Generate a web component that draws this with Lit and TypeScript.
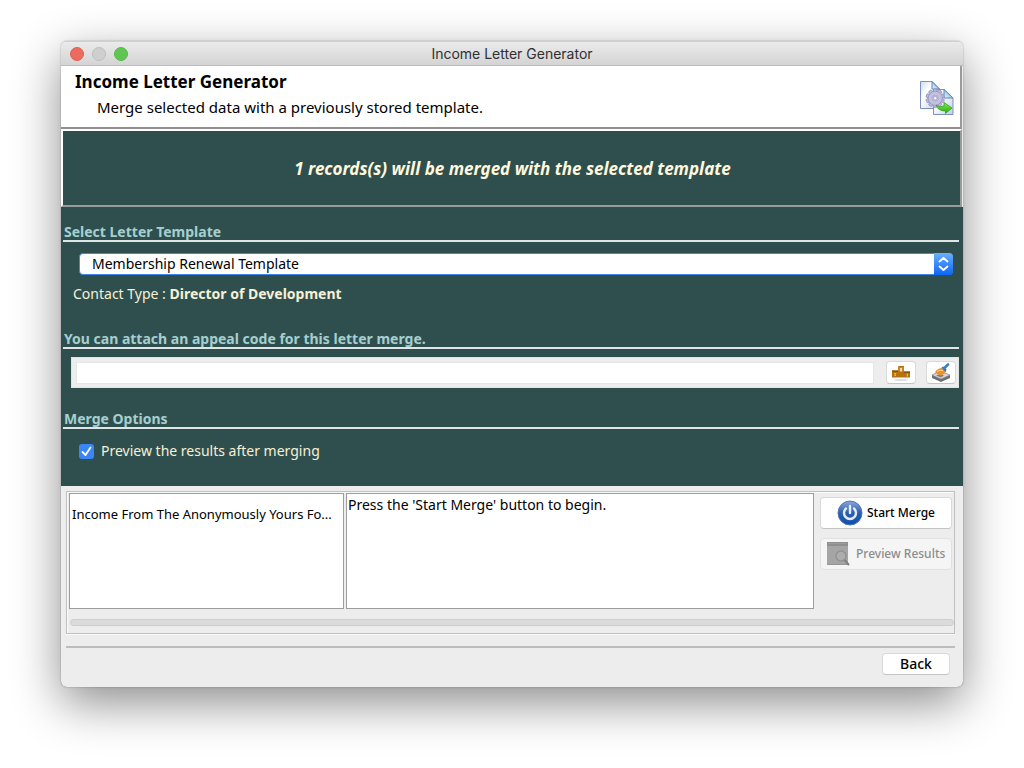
import { LitElement, html, css, svg } from "lit";
import { customElement, state } from "lit/decorators.js";

const gearTeeth = [0, 36, 72, 108, 144, 180, 216, 252, 288, 324];

const mergeIcon = html`<svg class="merge-icon" viewBox="0 0 36 36" aria-hidden="true">
  <defs>
    <linearGradient id="sheet" x1="0" y1="0" x2="1" y2="1">
      <stop offset="0" stop-color="#c9dbf0" /><stop offset=".35" stop-color="#fff" /><stop offset="1" stop-color="#bcd0e6" />
    </linearGradient>
    <linearGradient id="fold" x1="0" y1="1" x2="1" y2="0">
      <stop offset="0" stop-color="#f2faff" /><stop offset="1" stop-color="#4a9bd0" />
    </linearGradient>
    <linearGradient id="arrow" x1="0" y1="0" x2="0" y2="1">
      <stop offset="0" stop-color="#7df04a" /><stop offset="1" stop-color="#28a80e" />
    </linearGradient>
  </defs>
  <path d="M1.5 1.5H13L20.500 9V28.500H1.500Z" fill="url(#sheet)" stroke="#7c8fbd" />
  <path d="M13 1.500V9H20.500Z" fill="url(#fold)" stroke="#5f86b4" />
  <path d="M14.500 9.500H25L34 18V34.500H14.500Z" fill="url(#sheet)" stroke="#7c8fbd" />
  <path d="M25 9.500V18H34Z" fill="url(#fold)" stroke="#5f86b4" />
  <g fill="#bdbbdc" stroke="#8986b5" stroke-width=".7">
    ${gearTeeth.map((a) => svg`<rect x="14.400" y="9" width="3.600" height="5" rx="1" transform="rotate(${a} 16.200 18.200)" />`)}
    <circle cx="16.200" cy="18.200" r="7" />
  </g>
  <circle cx="16.200" cy="18.200" r="6.500" fill="#c3c1e2" />
  <circle cx="16.200" cy="18.200" r="3" fill="none" stroke="#b0add6" />
  <circle cx="16.200" cy="18.200" r="1.700" fill="#fff" stroke="#8f8cba" stroke-width=".6" />
  <path d="M17 25Q20 28 25 26V22.500L33 28L26.500 33.500V31Q19 31 17 25Z" fill="url(#arrow)" stroke="#3a9a24" stroke-width=".8" />
</svg>`;

const podiumIcon = html`<svg width="20" height="18" viewBox="0 0 20 18" aria-hidden="true">
  <ellipse cx="10" cy="16" rx="7" ry="1" fill="#ddd" />
  <path d="M1 6.500H7V2.500L8 2H13V7.500H19V13.500H1Z" fill="#b5720f" />
  <path d="M7 3H13V7.500H7Z" fill="#c98518" />
  <path d="M1 6.500H7V8H1ZM13 7.500H19V9H13Z" fill="#8a5104" />
  <path d="M10 4V7.500" stroke="#fff" stroke-width="1.400" />
  <path d="M3 9.500H5L3.500 11.500H5M15.500 10H17L16 11L17 12H15.500" fill="none" stroke="#e9c27c" stroke-width=".8" />
</svg>`;

const brushIcon = html`<svg width="20" height="20" viewBox="0 0 20 20" aria-hidden="true">
  <path d="M1 12L9 8L19 12V15L10 19L1 15Z" fill="#6d6d72" />
  <path d="M1 12L9 8L19 12L10 16Z" fill="#d5d7da" stroke="#8b8b90" stroke-width=".6" />
  <path d="M5 12.500L9 11L13 12.500L10 14.500Z" fill="#7d7f86" />
  <path d="M4 9Q7 5 11 5L15 8.500Q13 12 10 12.500Q6 12 4 9Z" fill="#ef9126" />
  <path d="M6 8.500Q9 6.500 12 7.500" fill="none" stroke="#ffd08a" />
  <path d="M10.500 4.500L12.500 3.500L15.500 6.500L14.500 9Z" fill="#2d6fb8" />
  <path d="M13.500 5L17 1.500" stroke="#3d7fc9" stroke-width="2.600" stroke-linecap="round" />
</svg>`;

const powerIcon = html`<svg width="26" height="26" viewBox="0 0 26 26" aria-hidden="true">
  <defs>
    <linearGradient id="power" x1="0" y1="0" x2="0" y2="1">
      <stop offset="0" stop-color="#8aa9db" /><stop offset=".5" stop-color="#2a5eb0" /><stop offset="1" stop-color="#0c4fae" />
    </linearGradient>
  </defs>
  <circle cx="13" cy="13" r="12" fill="url(#power)" stroke="#5274b4" />
  <path d="M9 8.500A6 6 0 1 0 17 8.500" fill="none" stroke="#e6edf8" stroke-width="2.400" stroke-linecap="round" />
  <path d="M13 6V13" stroke="#e6edf8" stroke-width="2.400" stroke-linecap="round" />
</svg>`;

const previewIcon = html`<svg width="24" height="26" viewBox="0 0 24 26" aria-hidden="true">
  <rect x="1" y="2" width="21" height="22" fill="#a5a5a5" />
  <rect x="1" y="1" width="21" height="4" fill="#8f8f8f" />
  <path d="M2 2.500H21" stroke="#9c9c9c" />
  <path d="M1 23.500H22" stroke="#949494" />
  <circle cx="15" cy="15" r="5" fill="#adadad" stroke="#929292" stroke-width="1.400" />
  <path d="M18.500 19L23 24" stroke="#808080" stroke-width="2" />
</svg>`;

@customElement("app-root")
export class AppRoot extends LitElement {
  @state() private preview = true;

  static styles = css`
    :host {
      display: block;
      box-sizing: border-box;
      min-height: 100vh;
      padding: 41px 61px 81px;
      background: #fff;
      color: #000;
      font-family: "Noto Sans", sans-serif;
      font-size: 14px;
      line-height: 20px;
      overflow: hidden;
    }
    * { box-sizing: border-box; }
    h1, h2, p { margin: 0; }
    svg { display: block; flex: none; }
    button, input, select { font: inherit; color: inherit; margin: 0; }

    .window {
      border-radius: 6px;
      background: #ededed;
      box-shadow: 0 0 1px rgba(0, 0, 0, 0.5), 0 0 3px rgba(0, 0, 0, 0.1), 0 16px 48px rgba(0, 0, 0, 0.45);
      overflow: hidden;
    }
    .titlebar {
      display: grid;
      grid-template-columns: 1fr auto 1fr;
      align-items: center;
      height: 25px;
      padding: 0 9px;
      background: linear-gradient(#ebebeb, #d4d4d4);
      border-top: 1px solid #d0d0d0;
      border-bottom: 1px solid #bcbcbc;
      color: #303030;
      font-family: Inter, sans-serif;
      font-size: 14px;
    }
    .lights { display: flex; gap: 8px; }
    .light { width: 14px; height: 14px; border-radius: 50%; border: 1px solid #dd5f54; background: #ec6a5e; }
    .light.idle { border-color: #bdbdbd; background: #cfcfcf; }
    .light.zoom { border-color: #58b947; background: #61c554; }

    .header {
      display: flex;
      justify-content: space-between;
      align-items: flex-start;
      height: 63px;
      padding: 4px 5px 0 14px;
      background: #fff;
      border-right: 2px solid #9a9a9a;
      border-bottom: 2px solid #8f8f8f;
      margin-right: 1px;
    }
    .header h1 { font-size: 17px; line-height: 24px; font-weight: 700; }
    .header p { padding-left: 22px; font-size: 15px; line-height: 26px; }
    .merge-icon { width: 36px; height: 36px; margin-top: 10px; }

    .banner {
      display: flex;
      align-items: center;
      justify-content: center;
      height: 78px;
      padding: 2px 0 0 2px;
      margin-right: 1px;
      background: #2f4f4f;
      border: 2px solid #9a9a9a;
      border-top-color: #fff;
      border-left-color: #fff;
      color: #fff8dc;
      font-size: 17px;
      font-weight: 700;
      font-style: italic;
    }
    .form { padding: 16px 4px 23px 2px; background: #2f4f4f; color: #f7f0d4; }
    .legend {
      padding-left: 1px;
      border-bottom: 2px solid #dfe6e6;
      color: #a5cfcf;
      font-size: 14px;
      line-height: 17px;
      font-weight: 700;
    }
    .picker { display: grid; align-items: center; margin: 11px 6px 0 16px; }
    .picker select {
      grid-area: 1 / 1;
      appearance: none;
      width: 100%;
      height: 22px;
      padding: 0 34px 0 12px;
      border: 1px solid #3f86e8;
      border-radius: 4px;
      background: #fff;
      color: #000;
      outline: none;
    }
    .stepper { grid-area: 1 / 1; justify-self: end; z-index: 1; pointer-events: none; }
    .contact { padding: 9px 0 0 10px; }
    .spaced { margin-top: 26px; }
    .appeal {
      display: flex;
      align-items: center;
      gap: 10px;
      height: 31px;
      margin: 8px 0 22px 8px;
      padding: 0 2px 0 4px;
      background: #ededed;
      border: 1px solid #dfe5e5;
    }
    .appeal input { flex: 1; min-width: 0; height: 22px; margin-right: 2px; padding: 0 4px; border: 1px solid #e6e6e6; background: #fff; color: #000; }
    .btn {
      display: flex;
      align-items: center;
      justify-content: center;
      padding: 0;
      border: 1px solid #d9d9d9;
      border-bottom-color: #c4c4c4;
      border-radius: 4px;
      background: #fff;
      color: #000;
      font-weight: 500;
    }
    .tool { width: 30px; height: 23px; }
    .check { display: flex; align-items: center; gap: 7px; padding: 10px 0 0 16px; line-height: 24px; }
    .check input {
      appearance: none;
      width: 15px;
      height: 15px;
      border-radius: 3px;
      background: #3b86f7 url("data:image/svg+xml,%3Csvg xmlns='http://www.w3.org/2000/svg' viewBox='0 0 15 15'%3E%3Cpath d='M3.500 8L6.500 11L11.500 3.500' fill='none' stroke='white' stroke-width='1.800' stroke-linecap='round' stroke-linejoin='round'/%3E%3C/svg%3E") center / contain;
    }
    .check input:not(:checked) { background: #fff; }

    .lower { padding: 5px 8px 12px 5px; }
    .panel { border: 1px solid #c0c0c0; box-shadow: inset 1px 1px #fafafa, 0 1px #fafafa; padding: 1px 0 7px 2px; }
    .work { display: grid; grid-template-columns: 275fr 468fr 138px; gap: 2px; height: 116px; }
    .box { min-width: 0; background: #fff; border: 1px solid #9c9c9c; padding: 1px; }
    .box.list { padding: 10px 2px 0; font-size: 13px; }
    .box p { overflow: hidden; text-overflow: ellipsis; white-space: nowrap; }
    .actions { display: flex; flex-direction: column; gap: 9px; padding: 4px 0 0 4px; }
    .action { width: 132px; height: 32px; font-size: 12px; gap: 4px; }
    .action:disabled { justify-content: flex-start; padding-left: 5px; gap: 6px; background: #f5f5f5; border-color: #e0e0e0; color: #8c8c8c; }
    .progress { height: 7px; margin: 10px 0 0 1px; border: 1px solid #cdcdcd; border-radius: 4px; background: #dbdbdb; }
    .footer { display: flex; justify-content: flex-end; margin: 0 8px 0 5px; padding: 5px 5px 12px 0; border-top: 2px solid #bdbdbd; }
    .back { width: 68px; height: 22px; }
  `;

  render() {
    return html`
      <main class="window">
        <div class="titlebar">
          <div class="lights"><span class="light"></span><span class="light idle"></span><span class="light zoom"></span></div>
          <span>Income Letter Generator</span>
        </div>
        <header class="header">
          <div>
            <h1>Income Letter Generator</h1>
            <p>Merge selected data with a previously stored template.</p>
          </div>
          ${mergeIcon}
        </header>
        <div class="banner">1 records(s) will be merged with the selected template</div>
        <div class="form">
          <h2 class="legend"><label for="template">Select Letter Template</label></h2>
          <div class="picker">
            <select id="template"><option>Membership Renewal Template</option></select>
            <svg class="stepper" width="19" height="22" viewBox="0 0 19 22" aria-hidden="true">
              <defs><linearGradient id="blue" x1="0" y1="0" x2="0" y2="1"><stop offset="0" stop-color="#6cb0fa" /><stop offset="1" stop-color="#0a66f6" /></linearGradient></defs>
              <path d="M0 0H15Q19 0 19 4V18Q19 22 15 22H0Z" fill="url(#blue)" />
              <path d="M5.500 8.500L9.500 5L13.500 8.500M5.500 13.500L9.500 17L13.500 13.500" fill="none" stroke="#fff" stroke-width="1.800" stroke-linecap="round" stroke-linejoin="round" />
            </svg>
          </div>
          <p class="contact">Contact Type : <b>Director of Development</b></p>
          <h2 class="legend spaced"><label for="appeal">You can attach an appeal code for this letter merge.</label></h2>
          <div class="appeal">
            <input id="appeal" type="text" />
            <button class="btn tool" aria-label="Choose appeal code">${podiumIcon}</button>
            <button class="btn tool" aria-label="Clear appeal code">${brushIcon}</button>
          </div>
          <h2 class="legend">Merge Options</h2>
          <label class="check">
            <input type="checkbox" .checked=${this.preview}
              @change=${(e: Event) => (this.preview = (e.target as HTMLInputElement).checked)} />
            Preview the results after merging
          </label>
        </div>
        <div class="lower">
          <div class="panel">
            <div class="work">
              <div class="box list"><p>Income From The Anonymously Yours Fo...</p></div>
              <div class="box"><p>Press the 'Start Merge' button to begin.</p></div>
              <div class="actions">
                <button class="btn action">${powerIcon}Start Merge</button>
                <button class="btn action" disabled>${previewIcon}Preview Results</button>
              </div>
            </div>
            <div class="progress" role="progressbar" aria-label="Merge progress"></div>
          </div>
        </div>
        <footer class="footer"><button class="btn back">Back</button></footer>
      </main>
    `;
  }
}
